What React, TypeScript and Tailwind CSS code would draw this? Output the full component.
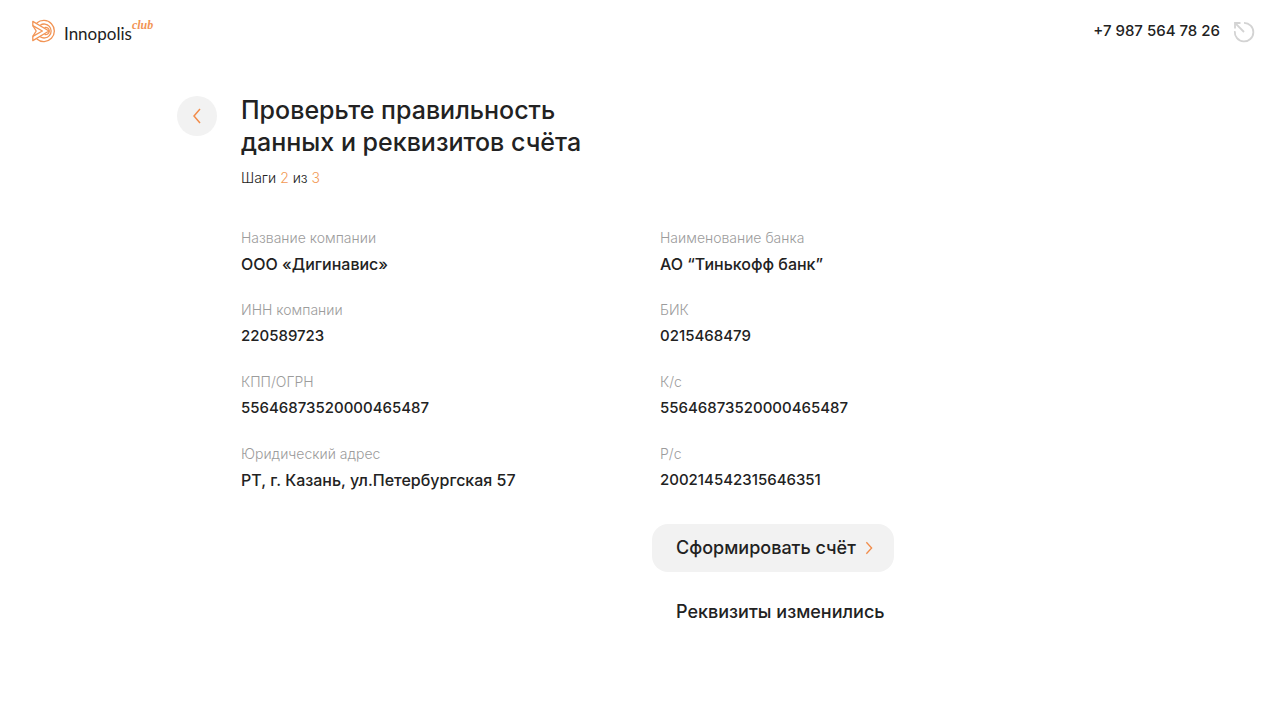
import type { ReactNode } from 'react';

type Field = {
    label: string;
    value: string;
};

const companyFields: Field[] = [
    { label: 'Название компании', value: 'ООО «Дигинавис»' },
    { label: 'ИНН компании', value: '220589723' },
    { label: 'КПП/ОГРН', value: '55646873520000465487' },
    { label: 'Юридический адрес', value: 'РТ, г. Казань, ул.Петербургская 57' },
];

const bankFields: Field[] = [
    { label: 'Наименование банка', value: 'АО “Тинькофф банк”' },
    { label: 'БИК', value: '0215468479' },
    { label: 'К/с', value: '55646873520000465487' },
    { label: 'Р/с', value: '200214542315646351' },
];

function Logo() {
    return (
        <a href="#" className="mb-0.5 flex items-center text-[#222222]">
            <svg className="h-6 w-6 text-[#f29455]" viewBox="0 0 24 24" fill="none" stroke="currentColor" strokeWidth={1.3} strokeLinejoin="round" aria-hidden="true">
                <path d="M4.8 4A10.6 10.6 0 1 1 4.8 20" />
                <path d="M8.2 6.2A7 7 0 1 1 8.2 17.8" />
                <path d="M12.5 8.6A3.6 3.6 0 1 1 12.5 15.4" />
                <path d="M0.8 2.4 17 12 0.8 21.6V17.4L4.2 12 0.8 6.6Z" />
                <path d="M0.8 6.6 10.4 12 0.8 17.4" />
            </svg>
            <span className="ml-2 mt-1.5 font-['Lato','Open_Sans',sans-serif] text-[17px] leading-6">Innopolis</span>
            <span className="mb-3 font-['Liberation_Serif',serif] text-xs font-bold italic leading-4 text-[#f29455]">club</span>
        </a>
    );
}

function LogoutIcon() {
    return (
        <svg className="h-6 w-6" viewBox="0 0 24 24" fill="none" stroke="currentColor" strokeWidth={1.8} aria-hidden="true">
            <path d="M12 2.8A9.3 9.3 0 1 1 2.8 11.2" />
            <path d="M12 12 3.2 3.2" />
            <path d="M3 8.5V3h5.5" />
        </svg>
    );
}

function Chevron({ className, d }: { className: string; d: string }) {
    return (
        <svg className={className} viewBox="0 0 10 16" fill="none" stroke="#f28c4a" strokeWidth={1.5} aria-hidden="true">
            <path d={d} />
        </svg>
    );
}

function FieldList({ fields }: { fields: Field[] }) {
    return (
        <dl className="flex flex-col gap-6">
            {fields.map(field => (
                <div key={field.label}>
                    <dt className="text-sm font-light leading-5 text-[#9c9c9c]">{field.label}</dt>
                    {/* account numbers are set slightly smaller than words */}
                    <dd className={/^\d+$/.test(field.value) ? 'mt-1 text-[15px] font-medium leading-6' : 'mt-1 text-base font-medium leading-6'}>
                        {field.value}
                    </dd>
                </div>
            ))}
        </dl>
    );
}

function Accent({ children }: { children: ReactNode }) {
    return <span className="text-[#f29a55]">{children}</span>;
}

export default function App() {
    return (
        <div className="min-h-screen bg-white font-['Inter','Open_Sans',sans-serif] text-[#222222]">
            <header className="flex min-h-16 items-center justify-between pl-8 pr-6">
                <Logo />
                <div className="flex items-center gap-3">
                    <a href="tel:+79875647826" className="mb-0.5 text-[15px] font-medium leading-6">+7 987 564 78 26</a>
                    <button type="button" aria-label="Выйти" className="text-[#d3d3d3]">
                        <LogoutIcon />
                    </button>
                </div>
            </header>

            <main className="mx-auto flex max-w-[926px] items-start gap-6 pt-8">
                <button type="button" aria-label="Назад" className="flex h-10 w-10 shrink-0 items-center justify-center rounded-full bg-[#f2f2f2]">
                    <Chevron className="h-4 w-2.5" d="M8 1 2 8 8 15" />
                </button>

                <div className="flex-1">
                    <h1 className="-mt-0.5 text-[25px] font-medium leading-8">
                        Проверьте правильность
                        <br />
                        данных и реквизитов счёта
                    </h1>
                    <p className="mt-2.5 text-sm font-light leading-5">
                        Шаги <Accent>2</Accent> из <Accent>3</Accent>
                    </p>

                    <div className="mt-10 grid grid-cols-2 pr-10">
                        <FieldList fields={companyFields} />
                        <div>
                            <div className="pl-2">
                                <FieldList fields={bankFields} />
                            </div>
                            <div className="mt-8 flex flex-col items-start gap-4">
                                <button type="button" className="flex h-12 items-center gap-2 whitespace-nowrap rounded-2xl bg-[#f2f2f2] pl-6 pr-5 text-lg font-medium">
                                    Сформировать счёт
                                    <Chevron className="h-3.5 w-2.5" d="M2 1.5 8 8 2 14.5" />
                                </button>
                                <button type="button" className="h-12 whitespace-nowrap rounded-2xl px-6 text-lg font-medium">
                                    Реквизиты изменились
                                </button>
                            </div>
                        </div>
                    </div>
                </div>
            </main>
        </div>
    );
}
